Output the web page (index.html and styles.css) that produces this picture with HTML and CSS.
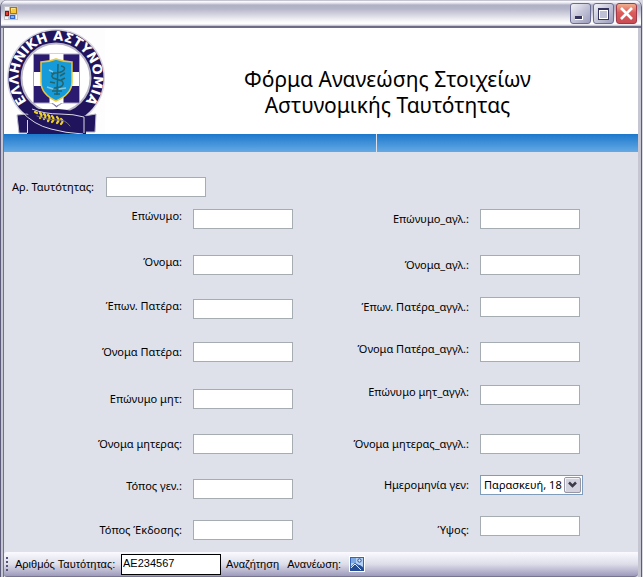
FILE: index.html
```html
<!DOCTYPE html>
<html lang="el">
<head>
<meta charset="utf-8">
<title>Φόρμα Ανανεώσης Στοιχείων Αστυνομικής Ταυτότητας</title>
<link rel="stylesheet" href="styles.css">
</head>
<body>
<div class="window">
  <div class="titlebar">
    <svg class="app-icon" width="14" height="14" viewBox="0 0 14 14" shape-rendering="crispEdges" aria-hidden="true">
      <path fill="#c4c4c8" d="M0 0h14v14H0z"/>
      <path fill="#f4f4f6" d="M1 1h4v3H1zM1 11h3v2H1zM12 9h1v4h-1z"/>
      <path fill="#a87810" d="M6 1h7v7H6z"/>
      <path fill="#f8c838" d="M7 2h5v5H7z"/>
      <path fill="#fce68c" d="M7 2h4v1H8v2H7z"/>
      <path fill="#8c1010" d="M1 5h4v5H1z"/>
      <path fill="#e04434" d="M2 6h2v3H2z"/>
      <path fill="#3468c8" d="M6 9h5v4H6z"/>
      <path fill="#7cb0fc" d="M7 10h3v2H7z"/>
    </svg>
    <div class="window-buttons">
      <button type="button" class="win-btn" aria-label="Ελαχιστοποίηση">
        <svg width="19" height="19" viewBox="0 0 19 19" shape-rendering="crispEdges"><path fill="#fff" d="M4 12h8v4H4z"/><path fill="#34345c" d="M4 12h7v3H4z"/></svg>
      </button>
      <button type="button" class="win-btn" aria-label="Μεγιστοποίηση">
        <svg width="19" height="19" viewBox="0 0 19 19" shape-rendering="crispEdges"><path fill="#34345c" d="M4 4h11v12H4z"/><path fill="#fff" d="M5 6h9v9H5z"/><path fill="#c0c0d4" d="M6 7h7v7H6z"/></svg>
      </button>
      <button type="button" class="win-btn win-close" aria-label="Κλείσιμο">
        <svg width="19" height="19" viewBox="0 0 19 19"><path stroke="#fff" stroke-width="2.6" d="M4 4l11 11M15 4L4 15"/></svg>
      </button>
    </div>
  </div>

  <div class="client">
    <header class="banner">
      <svg class="emblem" width="101" height="106" viewBox="0 0 101 106" role="img" aria-label="Ελληνική Αστυνομία">
        <defs><path id="ring" d="M23.700 74.700A37.500 37.500 0 1 1 80.300 74.700"/></defs>
        <path fill="#fdfdfd" d="M0 0h101v106H0z"/>
        <circle cx="52" cy="50" r="49" fill="#d6d5de"/>
        <circle cx="52" cy="50" r="47.500" fill="#20145c"/>
        <circle cx="52" cy="50" r="34.500" fill="#fff" stroke="#b9b6c6" stroke-width="2"/>
        <text class="emblem-text"><textPath href="#ring" startOffset="50%">ΕΛΛΗΝΙΚΗ ΑΣΤΥΝΟΜΙΑ</textPath></text>
        <path fill="#2b1b70" stroke="#a9a5bd" d="M29.500 26h46v49H58l-5.500 4-5-4h-18z"/>
        <path fill="#fff" d="M45.500 26h14v49h-2l-5 3-4-3h-3zM30 44h45v14H30z"/>
        <path fill="#159ada" stroke="#e9c63c" stroke-width="1.500" d="M37 34q8 0 15-3 8 3 16 3v20q0 12-16 19Q37 66 37 54z"/>
        <g fill="none" stroke="#24656d" stroke-width="1.500">
          <path d="M54 36l-1 31M57 38q5 1 3 4-3 3-9 3-5 2-2 5l9 3q3 4-2 6l-6 1M47 45h5M56 48l5-3M46 54l5 1M57 52l4-2M48 63h10M50 66h6"/>
          <path stroke="#83c7df" d="M43 59l6 2M55 61l7-1M45 42l4 2"/>
        </g>
        <path fill="#20145c" stroke="#b9b6c6" d="M13 87l10-1 7 4v15H15zM80 88l12-2-1 18H79z"/>
        <path fill="#20145c" d="M26 80q11 2 28 1 16 1 28 7v18H23V92z"/>
        <path fill="none" stroke="#d9d7e2" d="M17 83q13 14 30 18 14 4 32 5M28 81q12 5 28 5 14 0 24 3v16M23.500 105V92"/>
        <g fill="none" stroke="#f0d21f" stroke-width="2.200" stroke-linecap="round">
          <path d="M31 84l2 1M36 85q3 2 0 5M40 86q3 2 0 5M44 87q3 2 0 6M48 88q3 3 0 6M53 89q3 3 0 6M57 91q3 2 0 5"/>
          <path stroke="#77717c" stroke-width="1" d="M33 88q10 4 20 4 8-1 13 6"/>
        </g>
      </svg>
      <h1 class="title">Φόρμα Ανανεώσης Στοιχείων<br>Αστυνομικής Ταυτότητας</h1>
    </header>
    <div class="stripe"><span class="stripe-part"></span><span class="stripe-part"></span></div>

    <form class="form">
      <div class="id-row">
        <label for="idno">Αρ. Ταυτότητας:</label>
        <input class="box" id="idno" type="text">
      </div>
      <div class="columns">
        <div class="fields fields-native">
          <div class="field label-high"><label for="l1">Επώνυμο:</label><input class="box" id="l1" type="text"></div>
          <div class="field label-high"><label for="l2">Όνομα:</label><input class="box" id="l2" type="text"></div>
          <div class="field label-high"><label for="l3">Έπων. Πατέρα:</label><input class="box" id="l3" type="text"></div>
          <div class="field"><label for="l4">Όνομα Πατέρα:</label><input class="box" id="l4" type="text"></div>
          <div class="field"><label for="l5">Επώνυμο μητ:</label><input class="box" id="l5" type="text"></div>
          <div class="field"><label for="l6">Όνομα μητερας:</label><input class="box" id="l6" type="text"></div>
          <div class="field label-high"><label for="l7">Τόπος γεν.:</label><input class="box" id="l7" type="text"></div>
          <div class="field"><label for="l8">Τόπος Έκδοσης:</label><input class="box" id="l8" type="text"></div>
        </div>
        <div class="fields fields-latin">
          <div class="field"><label for="r1">Επώνυμο_αγλ.:</label><input class="box" id="r1" type="text"></div>
          <div class="field"><label for="r2">Όνομα_αγλ.:</label><input class="box" id="r2" type="text"></div>
          <div class="field"><label for="r3">Έπων. Πατέρα_αγγλ.:</label><input class="box" id="r3" type="text"></div>
          <div class="field label-high"><label for="r4">Όνομα Πατέρα_αγγλ.:</label><input class="box" id="r4" type="text"></div>
          <div class="field label-high"><label for="r5">Επώνυμο μητ_αγγλ:</label><input class="box" id="r5" type="text"></div>
          <div class="field"><label for="r6">Όνομα μητερας_αγγλ.:</label><input class="box" id="r6" type="text"></div>
          <div class="field"><label for="r7">Ημερομηνία γεν:</label>
            <span class="picker">
              <select id="r7"><option>Παρασκευή, 18</option></select>
              <svg class="picker-arrow" width="17" height="16" viewBox="0 0 17 16" aria-hidden="true"><rect x=".5" y=".5" width="16" height="15" rx="1.500" fill="#d3d3e0" stroke="#9696a6"/><path d="M1.500 14V1.500H15" fill="none" stroke="#f2f2f8"/><path d="M5 5.500l3.500 3.500L12 5.500" fill="none" stroke="#3c3c48" stroke-width="2.500"/></svg>
            </span>
          </div>
          <div class="field label-low"><label for="r8">Ύψος:</label><input class="box" id="r8" type="text"></div>
        </div>
      </div>
    </form>

    <div class="toolbar">
      <span class="grip"></span>
      <label for="search">Αριθμός Ταυτότητας:</label>
      <input class="search" id="search" type="text" value="ΑΕ234567">
      <button type="button" class="tool">Αναζήτηση</button>
      <span class="tool-label">Ανανέωση:</span>
      <button type="button" class="tool" aria-label="Ανανέωση">
        <svg width="16" height="16" viewBox="0 0 16 16" aria-hidden="true">
          <path fill="#fff" d="M0 0h16v16H0z"/>
          <path fill="#3464b8" d="M1 1h14v14H1z"/>
          <path fill="#b4d0f4" d="M2 2h12v9L6 7 2 11z"/>
          <path fill="#7ca8e4" d="M2 2h5v5H2z"/>
          <path fill="#244c94" d="M1 12l5-5 3 3 2-1 4 4v2H1z"/>
          <path stroke="#dcecfc" fill="none" d="M2 12l4-4 6 6"/>
          <circle cx="10.500" cy="4.500" r="1.700" fill="#d8e8fc" stroke="#2450a0"/>
        </svg>
      </button>
    </div>
  </div>
</div>
</body>
</html>
```
FILE: styles.css
```css
* { box-sizing: border-box; }

body {
  margin: 0;
  background: #d9d9e4;
  color: #000;
  font: 11px/16px "Noto Sans", "Liberation Sans", sans-serif;
}

.window {
  display: flex;
  flex-direction: column;
  min-height: 100vh;
  margin-right: 1px;
  padding: 0 3px 0 2px;
  border: solid #5c5c7a;
  border-width: 0 1px;
  border-radius: 7px 7px 0 0;
  background: #c6c6d2;
}

.titlebar {
  display: flex;
  align-items: center;
  justify-content: space-between;
  height: 28px;
  margin: 0 -3px 0 -2px;
  padding: 0 4px 0 3px;
  border-bottom: 2px solid #6c6c88;
  border-radius: 7px 7px 0 0;
  background: linear-gradient(#8c8ca4 0, #fff 1px, #e6e6ee 3px, #b0b0c6 5px, #b6b6ca 9px, #dcdce6 16px, #fcfcfd 22px, #fff 24px, #b4b4c6 26px);
}

.window-buttons { display: flex; gap: 2px; }

.win-btn {
  width: 21px;
  height: 21px;
  padding: 0;
  border: 1px solid #6a6c94;
  border-radius: 3px;
  background: linear-gradient(135deg, #f2f2f8, #c4c4d8 50%, #9c9cbc);
}

.win-btn svg { display: block; }

.win-close {
  border-color: #a03848;
  background: linear-gradient(#f0b090, #dc5c5c 45%, #c84c54);
}

.client {
  display: flex;
  flex: 1;
  flex-direction: column;
  border-left: 1px solid #77756c;
  background: #dfe1ea;
}

.banner {
  display: flex;
  align-items: flex-start;
  height: 106px;
  background: #fff;
}

.emblem { flex: none; }

.emblem-text {
  fill: #fff;
  font: bold 13px "DejaVu Sans", sans-serif;
  text-anchor: middle;
}

.title {
  flex: 1;
  margin: 0;
  padding: 38px 0 0 32px;
  font: 21px/26px "Noto Sans", sans-serif;
  text-align: center;
}

.stripe {
  display: grid;
  grid-template-columns: 372px 1fr;
  gap: 1px;
  height: 18px;
  background: #dfe1ea;
}

.stripe-part { background: linear-gradient(#1c78cc, #64aae4); }

.form {
  flex: 1;
  padding-top: 25px;
}

.id-row {
  display: flex;
  align-items: center;
  margin-bottom: 12px;
  padding-left: 8px;
}

.id-row label { width: 94px; }

.box {
  width: 100px;
  height: 20px;
  padding: 1px 3px;
  border: 1px solid #a5acb2;
  background: #fff;
  font: inherit;
}

.columns {
  display: grid;
  grid-template-columns: 289px 1fr;
}

.fields { display: grid; align-content: start; }
.fields-native { grid-template-rows: 46px 44px 43px 47px 45px 45px 41px 20px; }
.fields-latin { grid-template-rows: 46px 42px 45px 43px 49px 41px 41px 20px; }

.field {
  display: flex;
  align-items: center;
  gap: 11px;
  height: 20px;
}

.field label {
  text-align: right;
  white-space: nowrap;
}

.fields-native label { width: 178px; }
.fields-latin label { width: 176px; }
.label-high label { align-self: flex-start; margin-top: -1px; }
.label-low label { align-self: flex-end; margin-bottom: -2px; }

.picker {
  position: relative;
  width: 103px;
  height: 20px;
}

.picker select {
  display: block;
  width: 100%;
  height: 100%;
  padding: 0 0 0 3px;
  border: 1px solid #7f9db9;
  border-radius: 0;
  appearance: none;
  background: #fff;
  color: #000;
  font: inherit;
}

.picker-arrow {
  position: absolute;
  top: 2px;
  right: 2px;
  pointer-events: none;
}

.toolbar {
  display: flex;
  align-items: center;
  height: 25px;
  padding-left: 2px;
  border-bottom: 1px solid #77758f;
  border-radius: 3px 0 4px 3px;
  background: linear-gradient(#fafaff, #dedeea 50%, #9c9aba);
  font-family: "Liberation Sans", Arial, sans-serif;
}

.grip {
  width: 2px;
  height: 14px;
  margin-right: 7px;
  background: repeating-linear-gradient(#54547c 0 2px, transparent 2px 4px);
}

.toolbar label { width: 106px; white-space: nowrap; }

.search {
  width: 100px;
  height: 21px;
  padding: 0 1px 2px;
  border: 1px solid #000;
  background: #fff;
  color: #000;
  font: inherit;
}

.tool {
  margin-left: 5px;
  padding: 0;
  border: 0;
  background: none;
  color: #000;
  font: inherit;
}

.tool svg { display: block; }
.tool-label { margin: 0 3px 0 8px; }
```
